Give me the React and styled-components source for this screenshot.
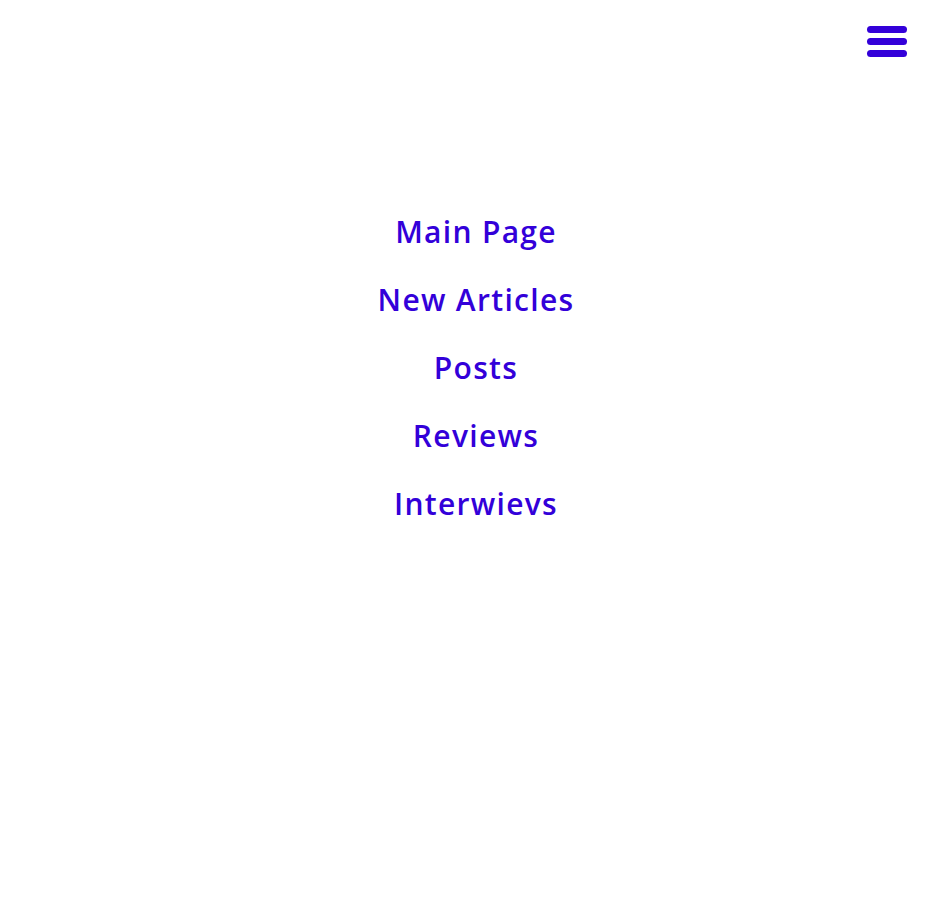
import { styled, createGlobalStyle } from "styled-components";

const GlobalStyle = createGlobalStyle`
    html, body {
        margin: 0;
        padding: 0;
        background: #ffffff;
    }
    body {
        font-family: "Open Sans", "Liberation Sans", sans-serif;
    }
`;

const Page = styled.div`
    width: 100%;
    min-height: 911px;
    display: flex;
    flex-direction: column;
`;

const TopBar = styled.header`
    display: flex;
    justify-content: flex-end;
    padding: 26px 40px 0 0;
`;

const Burger = styled.button`
    width: 40px;
    height: 31px;
    padding: 0;
    border: none;
    background: transparent;
    display: flex;
    flex-direction: column;
    justify-content: space-between;
    cursor: pointer;
`;

const Bar = styled.span`
    display: block;
    width: 40px;
    height: 7px;
    border-radius: 4px;
    background-color: #3300d9;
`;

const Nav = styled.nav`
    margin-top: 141px;
    padding-left: 5px;
`;

const NavList = styled.ul`
    list-style: none;
    margin: 0;
    padding: 0;
    display: flex;
    flex-direction: column;
    align-items: center;
`;

const NavLink = styled.a`
    display: block;
    font-size: 30px;
    font-weight: 600;
    line-height: 68px;
    color: #3300d9;
    text-decoration: none;
    letter-spacing: 1.3px;
`;

const links = ["Main Page", "New Articles", "Posts", "Reviews", "Interwievs"];

function App() {
  return (
    <Page>
        <GlobalStyle />
        <TopBar>
            <Burger aria-label="menu">
                <Bar />
                <Bar />
                <Bar />
            </Burger>
        </TopBar>
        <Nav>
            <NavList>
                {links.map((l) => (
                    <li key={l}>
                        <NavLink href="#">{l}</NavLink>
                    </li>
                ))}
            </NavList>
        </Nav>
    </Page>
  )
}

export default App;
